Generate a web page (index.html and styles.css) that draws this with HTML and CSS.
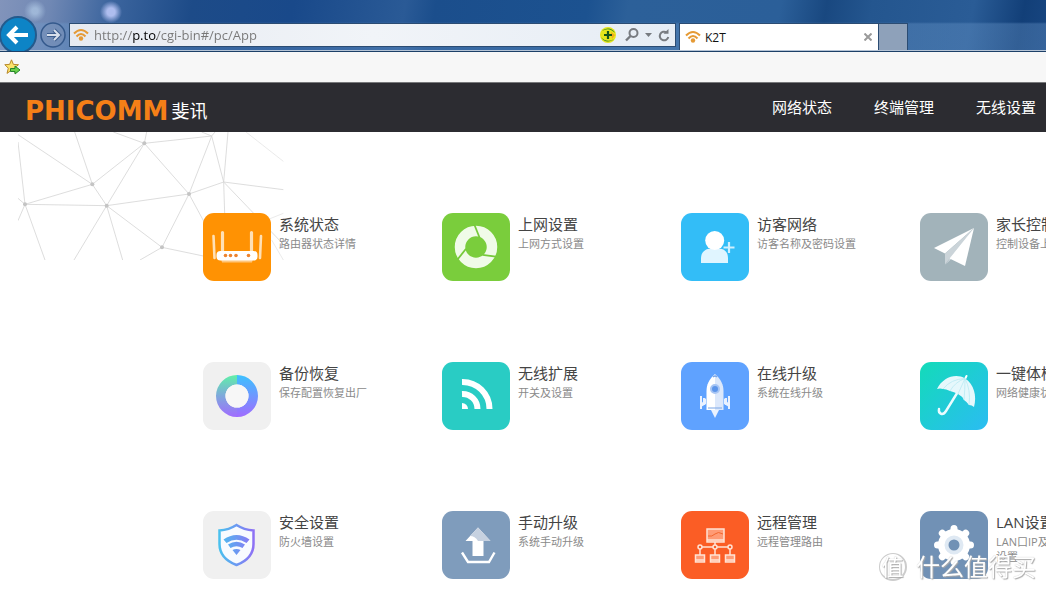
FILE: index.html
```
<!DOCTYPE html>
<html lang="zh-CN">
<head>
<meta charset="utf-8">
<meta name="viewport" content="width=device-width, initial-scale=1">
<title>K2T</title>
<link rel="stylesheet" href="styles.css">
</head>
<body>
<div class="browser">
  <div class="toolbar">
    <button class="back" type="button" aria-label="后退">
      <svg width="38" height="38" viewBox="0 0 38 38"><circle cx="19" cy="19" r="18" fill="#0d84c6" stroke="#245a8c" stroke-width="2"/><path d="M29 19H11M18 11l-8 8 8 8" fill="none" stroke="#fff" stroke-width="4"/></svg>
    </button>
    <button class="forward" type="button" aria-label="前进">
      <svg width="26" height="26" viewBox="0 0 26 26"><circle cx="13" cy="13" r="12" fill="#7890b6" fill-opacity=".6" stroke="#34598c" stroke-width="1.500"/><path d="M7 13h12M14 8l5 5-5 5" fill="none" stroke="#3d5d8d" stroke-width="4"/><path d="M7 13h12M14 8l5 5-5 5" fill="none" stroke="#d8e0ec" stroke-width="2"/></svg>
    </button>
    <div class="address">
      <svg class="wifi" width="16" height="14" viewBox="0 0 16 14"><g fill="none" stroke="#e59a35" stroke-width="2"><path d="M1 5.500Q8-1.500 15 5.500"/><path d="M3.500 8.500Q8 3.500 12.500 8.500"/></g><circle cx="8" cy="10.500" r="2.200" fill="#e59a35"/></svg>
      <input class="url" type="text" aria-label="地址" value="http://p.to/cgi-bin#/pc/App">
      <button class="tool" type="button" aria-label="加速"><svg width="16" height="16" viewBox="0 0 16 16"><circle cx="8" cy="8" r="8" fill="#e6e51c"/><path d="M2 4A8 8 0 0 1 15 6Q9-.5 2 4ZM14 12A8 8 0 0 1 1 10Q7 16.500 14 12Z" fill="#388c24"/><path d="M11 5l4 3-3 4Z" fill="#f4a91c"/><path d="M8 4v8M4 8h8" stroke="#15551b" stroke-width="2.200"/></svg></button>
      <button class="tool tool-search" type="button" aria-label="搜索"><svg width="14" height="14" viewBox="0 0 14 14"><circle cx="8.500" cy="5" r="4" fill="none" stroke="#777b80" stroke-width="2"/><path d="M5.500 8L1 12.500" stroke="#777b80" stroke-width="2.400"/></svg></button>
      <button class="tool" type="button" aria-label="更多"><svg width="7" height="4" viewBox="0 0 7 4"><path d="M0 0h7L3.500 4Z" fill="#777b80"/></svg></button>
      <button class="tool" type="button" aria-label="刷新"><svg width="12" height="13" viewBox="0 0 12 13"><path d="M8.500 3.400A4.300 4.300 0 1 0 10.300 8" fill="none" stroke="#777b80" stroke-width="2"/><path d="M5.500 4.800h5V0Z" fill="#777b80"/></svg></button>
    </div>
    <div class="tabs">
      <div class="tab">
        <svg class="wifi" width="16" height="14" viewBox="0 0 16 14"><g fill="none" stroke="#e59a35" stroke-width="2"><path d="M1 5.500Q8-1.500 15 5.500"/><path d="M3.500 8.500Q8 3.500 12.500 8.500"/></g><circle cx="8" cy="10.500" r="2.200" fill="#e59a35"/></svg>
        <span class="tab-title">K2T</span>
        <button class="tool" type="button" aria-label="关闭标签页"><svg width="8" height="8" viewBox="0 0 8 8"><path d="M.5.5l7 7M7.500.5l-7 7" stroke="#9a9a9a" stroke-width="2"/></svg></button>
      </div>
      <button class="new-tab" type="button" aria-label="新建标签页"></button>
    </div>
  </div>
</div>
<div class="favorites">
  <button class="tool" type="button" aria-label="添加到收藏夹栏"><svg width="17" height="16" viewBox="0 0 17 16"><path d="M7.500.8l1.900 4.600 5.100.3-3.900 3.200 1.200 5-4.300-2.700L3 14.400l1.300-5.200L.8 5.700l4.800-.3Z" fill="#fbe36a" stroke="#b8892c"/><path d="M6.500 9.500H11V7l5 4-5 4v-2.500H6.500Z" fill="#6bd04a" stroke="#23852c"/></svg></button>
</div>

<header class="site-header">
  <a class="brand" href="#"><span class="brand-latin">PHICOMM</span><span class="brand-cn">斐讯</span></a>
  <nav class="nav"><a href="#">网络状态</a><a href="#">终端管理</a><a href="#">无线设置</a></nav>
</header>

<main class="main">
  <svg class="mesh" width="266" height="128" viewBox="54 6 798 384" aria-hidden="true">
    <g fill="none" stroke="#d6d6d6" stroke-width="2.500">
      <path d="M54 14L277 163L224 6M277 163L433 40L340 6M433 40L440 6M433 40L635 18L605 6M635 18L645 6M635 18L567 192L433 40L320 227L277 163M277 163L75 223L54 36M75 223L54 205M75 223L54 272M75 223L135 390M75 223L320 227L567 192L671 156L635 18M671 156L684 6M671 156L674 250M671 156L850 179M671 156L852 345M567 192L486 352L320 227L222 390M320 227L368 390M567 192L620 290M486 352L420 390M486 352L610 378"/>
      <path d="M738 6L850 94M810 266L850 250M815 330L850 390" stroke="#e6e6e6"/>
    </g>
    <g fill="#c4c4c4"><circle cx="433" cy="40" r="6"/><circle cx="277" cy="163" r="6"/><circle cx="75" cy="223" r="6"/><circle cx="320" cy="227" r="6"/><circle cx="567" cy="192" r="6"/><circle cx="486" cy="352" r="6"/></g>
  </svg>

  <div class="apps">
    <a class="app" href="#">
      <svg class="tile orange" viewBox="0 0 68 68"><g stroke="#ffe0b5" stroke-width="2.600" stroke-linecap="round"><path d="M10.500 23L11.500 45M58 23L57 45"/><path d="M19.500 19.500V38M48.500 19.500V38" stroke-width="3.200"/></g><path d="M18 46h32l-1 3.500H19Z" fill="#ffc67d"/><rect x="13.500" y="38" width="41" height="9.500" rx="4" fill="#fff"/><g fill="#ee8430"><circle cx="22.500" cy="42.500" r="1.800"/><circle cx="27.500" cy="42.500" r="1.800"/><circle cx="33" cy="42.500" r="1.800"/><circle cx="45.500" cy="42.500" r="1.800"/></g></svg>
      <span class="text"><span class="name">系统状态</span><span class="desc">路由器状态详情</span></span>
    </a>
    <a class="app" href="#">
      <svg class="tile green" viewBox="0 0 68 68"><circle cx="34" cy="34" r="16" fill="none" stroke="#f0fbe8" stroke-width="10.500"/><g stroke="#76c93b" stroke-width="1.800"><path d="M32.500 12L37.500 24.500"/><path d="M32.500 12L37.500 24.500" transform="rotate(120 34 34)"/><path d="M32.500 12L37.500 24.500" transform="rotate(240 34 34)"/></g></svg>
      <span class="text"><span class="name">上网设置</span><span class="desc">上网方式设置</span></span>
    </a>
    <a class="app" href="#">
      <svg class="tile sky" viewBox="0 0 68 68"><path d="M20 50V45C20 39 25 35.500 30 35.500h7.500C43 35.500 47 39 47 45v5Z" fill="#e0f5ff"/><circle cx="33.700" cy="27.500" r="9.500" fill="#fff"/><path d="M48 29v11M42.500 34.500h11" stroke="#d0effe" stroke-width="2.200"/></svg>
      <span class="text"><span class="name">访客网络</span><span class="desc">访客名称及密码设置</span></span>
    </a>
    <a class="app" href="#">
      <svg class="tile gray" viewBox="0 0 68 68"><path d="M54 15L14 35l11 5.500Z" fill="#fff"/><path d="M54 15L25 40.500v11Z" fill="#cbd4d9"/><path d="M54 15L25.500 51.500 31 46Z" fill="#e2e8ec"/><path d="M54 15L29.500 45.500 45 53Z" fill="#fff"/></svg>
      <span class="text"><span class="name">家长控制</span><span class="desc">控制设备上网</span></span>
    </a>

    <a class="app" href="#">
      <svg class="tile light" viewBox="0 0 68 68"><defs><linearGradient id="ringL" x1="0" y1="0" x2="0" y2="1"><stop offset="0" stop-color="#5ff0a8"/><stop offset=".5" stop-color="#7fa8dc"/><stop offset="1" stop-color="#a06cff"/></linearGradient><linearGradient id="ringR" x1="0" y1="0" x2="0" y2="1"><stop offset="0" stop-color="#3cc1ff"/><stop offset="1" stop-color="#a06cff"/></linearGradient></defs><path d="M34 13a21 21 0 0 0 0 42V45.500a11.500 11.500 0 0 1 0-23Z" fill="url(#ringL)"/><path d="M34 13a21 21 0 0 1 0 42V45.500a11.500 11.500 0 0 0 0-23Z" fill="url(#ringR)"/><circle cx="34" cy="34" r="11.500" fill="#f7f7f7"/></svg>
      <span class="text"><span class="name">备份恢复</span><span class="desc">保存配置恢复出厂</span></span>
    </a>
    <a class="app" href="#">
      <svg class="tile teal" viewBox="0 0 68 68"><path d="M20 41a6 6 0 0 1 6 6h-6Z" fill="#fff"/><path d="M20 32a15 15 0 0 1 15.500 15" fill="none" stroke="#fff" stroke-width="6"/><path d="M20 20a27 27 0 0 1 27.500 27" fill="none" stroke="#fff" stroke-width="6"/></svg>
      <span class="text"><span class="name">无线扩展</span><span class="desc">开关及设置</span></span>
    </a>
    <a class="app" href="#">
      <svg class="tile blue" viewBox="0 0 68 68"><g fill="none" stroke="#eaf2ff" stroke-width="2"><path d="M20 34v13M48 34v13M23 36v7M45 36v7"/></g><path d="M25 36L20 42v3l5-3ZM43 36l5 6v3l-5-3Z" fill="#eaf2ff"/><path d="M30 48h8L34 56Z" fill="#eaf2ff"/><path d="M34 12C28 17 25.500 23 25.500 29v19H34Z" fill="#fff"/><path d="M34 12c6 5 8.500 11 8.500 17v19H34Z" fill="#dce8fb"/><path d="M32 15q2-2 4 0M27 46h14" stroke="#7aa6e6" stroke-width="1.200" fill="none"/><circle cx="34" cy="27" r="4" fill="#5c95ea" stroke="#a7c5f4" stroke-width="2"/></svg>
      <span class="text"><span class="name">在线升级</span><span class="desc">系统在线升级</span></span>
    </a>
    <a class="app" href="#">
      <svg class="tile aqua" viewBox="0 0 68 68"><path d="M39 28L26 49C23 54 18 52 19 47" fill="none" stroke="#eafcff" stroke-width="2.400" stroke-linecap="round"/><path d="M45 17l1.500-3" stroke="#fff" stroke-width="2" stroke-linecap="round"/><path d="M17 27C23 15 36 11 45 16.500S57 34 54 45q-2-2-5-2-2-3-5-5-2-4-6-6-4-2-8-3-4-2-7-2-3-1-6 0Z" fill="#e6f8fc"/><path d="M45 16.500Q31 17 23 27M45 16.500Q35 20 30 29M45 16.500L38 32M45 16.500Q45 28 44 38M45 16.500Q51 28 49 43" fill="none" stroke="#b9eaf2" stroke-width=".8"/></svg>
      <span class="text"><span class="name">一键体检</span><span class="desc">网络健康状况</span></span>
    </a>

    <a class="app" href="#">
      <svg class="tile light" viewBox="0 0 68 68"><defs><linearGradient id="shield" gradientUnits="userSpaceOnUse" x1="16" y1="0" x2="51" y2="0"><stop offset="0" stop-color="#49c1ee"/><stop offset="1" stop-color="#8f70f5"/></linearGradient></defs><path d="M33.500 14C28 17.500 23 19 16.500 19.500V33C16.500 43 23 50 33.500 54 44 50 50.500 43 50.500 33V19.500C44 19 39 17.500 33.500 14Z" fill="#f8fbff" stroke="url(#shield)" stroke-width="2.500"/><path d="M20.500 28.500Q33.500 19.500 46.500 28.500L43.500 32Q33.500 25.500 23.500 32ZM25 33.500Q33.500 28 42 33.500L39.500 37Q33.500 33.500 27.500 37ZM29.500 39q4-2 8 0L33.500 44Z" fill="url(#shield)"/></svg>
      <span class="text"><span class="name">安全设置</span><span class="desc">防火墙设置</span></span>
    </a>
    <a class="app" href="#">
      <svg class="tile steel" viewBox="0 0 68 68"><path d="M36 16.500L23.500 30H30.500V45h11V30H48.500Z" fill="#fff"/><path d="M36 16.500L28 25q5 0 8 5h12.500Z" fill="#c6d1e0"/><path d="M20 41.500L26 51H47l5.500-9.500" fill="none" stroke="#fff" stroke-width="2.400"/></svg>
      <span class="text"><span class="name">手动升级</span><span class="desc">系统手动升级</span></span>
    </a>
    <a class="app" href="#">
      <svg class="tile red" viewBox="0 0 68 68"><g fill="#ff9b75" stroke="#ffe2d4" stroke-width="1.500"><rect x="26" y="18" width="17" height="13"/><rect x="14.500" y="44" width="9" height="7"/><rect x="29.500" y="44" width="9" height="7"/><rect x="44.500" y="44" width="9" height="7"/></g><g stroke="#ffe2d4" stroke-width="1.500" fill="none"><path d="M26 29h17M34 31v13M19 44V36H49v8M14.500 49h9M29.500 49h9M44.500 49h9"/></g><path d="M27 25q4 1 7-2t8 0" stroke="#f2672f" fill="none"/><g fill="#f85d27" stroke="#ffe2d4" stroke-width="1.500"><circle cx="19" cy="36" r="2"/><circle cx="34" cy="36" r="2"/><circle cx="49" cy="36" r="2"/></g></svg>
      <span class="text"><span class="name">远程管理</span><span class="desc">远程管理路由</span></span>
    </a>
    <a class="app" href="#">
      <svg class="tile slate" viewBox="0 0 68 68"><g stroke="#fff" stroke-width="7" stroke-linecap="round"><path d="M34 17.500V50.500M17.500 34H50.500M22.300 22.300L45.700 45.700M45.700 22.300L22.300 45.700"/></g><circle cx="34" cy="34" r="16" fill="#fff"/><circle cx="34" cy="34" r="7.500" fill="#7191b5" stroke="#dfe9f3" stroke-width="4"/></svg>
      <span class="text"><span class="name">LAN设置</span><span class="desc">LAN口IP及<br>设置</span></span>
    </a>
  </div>
</main>
<div class="watermark"><span class="seal">值</span><span>什么值得买</span></div>
</body>
</html>
```
FILE: styles.css
```
* { box-sizing: border-box; }
body {
  margin: 0;
  min-height: 100vh;
  overflow: hidden;
  background: #fff;
  font-family: "Open Sans", "Noto Sans CJK SC", sans-serif;
}
a { color: inherit; text-decoration: none; }
button { padding: 0; border: 0; background: none; display: flex; align-items: center; justify-content: center; }
svg { display: block; flex: none; }

.browser {
  height: 52px;
  padding-top: 23px;
  overflow: hidden;
  border-bottom: 1px solid #1d4068;
  box-shadow: inset 0 -1px #b5c4d6;
  background:
    radial-gradient(circle at 35px 11px, rgba(169, 194, 224, .8) 3px, transparent 11px),
    radial-gradient(circle at 111px 12px, #aebdee 4px, transparent 11px),
    linear-gradient(to bottom, transparent 22px, rgba(110, 155, 205, .35) 24px),
    linear-gradient(100deg, #8294bb 0, #7088b4 50px, #3c659e 110px, #1d4b88 190px, #19498a 290px, #2a5a96 400px, #1b4e8c 430px, #1c5290 580px, #2c6099 620px, #2b5f99 770px, #194880 815px, #24568f 860px, #2a5c96 960px, #123f78 1010px, #1c4b87 1060px);
}
.toolbar { display: flex; align-items: flex-start; }
.back { margin: -7px 0 0 -1px; }
.forward { margin: -1px 3px 0 3px; }
.address {
  flex: 1;
  display: flex;
  align-items: center;
  height: 24px;
  padding: 0 5px 0 3px;
  gap: 6px;
  border: 1px solid #2b4c73;
  background: linear-gradient(90deg, #e6eaf1, #f1f4f8 50%, #e6edf5);
}
.url {
  flex: 1;
  min-width: 0;
  height: 22px;
  margin-left: -1px;
  padding: 0;
  border: 0;
  outline: 0;
  font: 13px/22px "Open Sans", sans-serif;
  color: transparent;
  background: linear-gradient(90deg, #777 38px, #000 38px, #000 63px, #777 63px);
  -webkit-background-clip: text;
  background-clip: text;
}
.tool-search { margin-left: 3px; }
.tabs { display: flex; width: 370px; padding-left: 3px; }
.tab {
  display: flex;
  align-items: center;
  width: 200px;
  height: 27px;
  padding: 0 6px 0 5px;
  gap: 4px;
  border: 1px solid #2b4c73;
  border-bottom: 0;
  background: #fff;
}
.tab-title { flex: 1; font-size: 12px; color: #111; }
.new-tab { width: 29px; height: 27px; border: 1px solid #2b4c73; border-width: 1px 1px 0 0; background: #8ea1ba; }
.favorites {
  display: flex;
  align-items: center;
  height: 31px;
  padding-left: 4px;
  border-bottom: 1px solid #77787a;
  background: #f7f7f7;
}

.site-header {
  display: flex;
  align-items: center;
  justify-content: space-between;
  height: 49px;
  padding: 0 10px 0 25px;
  background: #2c2c31;
  color: #fff;
}
.brand { display: flex; align-items: center; gap: 3px; padding-top: 6px; }
.brand-latin { font: bold 26px/28px "DejaVu Sans", sans-serif; color: #f57f17; }
.brand-cn { font-size: 18px; line-height: 28px; }
.nav { display: flex; gap: 42px; padding-bottom: 2px; font-size: 15px; line-height: 24px; }

.main { position: relative; padding: 81px 0 14px 203px; }
.mesh { position: absolute; left: 18px; top: 0; }
.apps { position: relative; display: grid; grid-template-columns: repeat(4, 239px); row-gap: 81px; }
.app { display: flex; gap: 8px; height: 68px; }
.text { display: flex; flex-direction: column; gap: 1px; white-space: nowrap; }
.name { font-size: 15px; line-height: 22px; color: #444; }
.desc { font-size: 11px; line-height: 15px; color: #8a8a8a; }
.tile { width: 68px; height: 68px; border-radius: 11px; }
.orange { background: #ff9203; }
.green { background: #7acd3c; }
.sky { background: #33bdf7; }
.gray { background: #a2b3ba; }
.light { background: #f0f0f0; }
.teal { background: #29ccc4; }
.blue { background: #5fa2ff; }
.aqua { background: linear-gradient(135deg, #13dbb9, #2bbcf2); }
.steel { background: #7f9cbc; }
.red { background: #fb5d25; }
.slate { background: #7191b5; }

.watermark {
  position: fixed;
  right: 10px;
  bottom: 8px;
  display: flex;
  align-items: center;
  gap: 9px;
  font-size: 24px;
  line-height: 36px;
  color: #fff;
  text-shadow: 1px 1px 1px #aaa, 0 0 1px #bbb;
  pointer-events: none;
}
.seal {
  width: 28px;
  height: 28px;
  border: 1px solid #ccc;
  border-right-width: 2px;
  border-bottom-width: 2px;
  border-radius: 50%;
  text-align: center;
  font-size: 22px;
  line-height: 25px;
}
```
